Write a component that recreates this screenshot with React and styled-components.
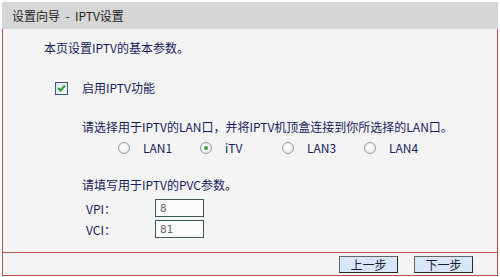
import React, { useState } from 'react';
import styled, { createGlobalStyle } from 'styled-components';

const GlobalStyle = createGlobalStyle`
  body {
    margin: 0;
    background: #fff;
    font-family: "Noto Sans CJK SC", "Noto Sans", sans-serif;
    font-size: 12px;
  }
`;

const Page = styled.div`
  padding: 2px;
  width: 496px;
`;

const Header = styled.div`
  height: 27px;
  background: #d6d6d6;
  display: flex;
  align-items: center;
  padding-left: 10px;
  color: #222;
  font-size: 12px;
  white-space: pre;
`;

const Body = styled.div`
  background: #f4f4f4;
  border: 1px solid #b9544f;
  border-top: none;
  display: flex;
  flex-direction: column;
`;

const Content = styled.div`
  height: 223px;
  padding-top: 11px;
  box-sizing: border-box;
  display: flex;
  flex-direction: column;
  color: #161a60;
`;

const Line = styled.div`
  height: 16px;
  line-height: 16px;
  margin-top: ${(p) => p.$mt || 0}px;
  padding-left: ${(p) => p.$indent || 0}px;
  display: flex;
  align-items: center;
  white-space: nowrap;
`;

const CheckBox = styled.span`
  width: 11px;
  height: 11px;
  border: 1px solid #3a5a78;
  background: linear-gradient(135deg, #dfe3e8, #fafafa);
  display: inline-flex;
  align-items: center;
  justify-content: center;
  margin-right: 14px;
`;

const RadioRow = styled.div`
  margin-top: 4px;
  padding-left: 115px;
  height: 16px;
  display: grid;
  grid-template-columns: repeat(4, 82px);
  align-items: center;
`;

const RadioItem = styled.label`
  display: flex;
  align-items: center;
  cursor: pointer;
`;

const RadioDot = styled.span`
  width: 10px;
  height: 10px;
  border-radius: 50%;
  border: 1px solid #8a9aa8;
  background: radial-gradient(circle at 40% 40%, #ffffff, #e4e6e8);
  display: inline-flex;
  align-items: center;
  justify-content: center;
  margin-right: 13px;

  &::after {
    content: '';
    width: 4px;
    height: 4px;
    border-radius: 50%;
    background: ${(p) => (p.$on ? '#2fa33a' : 'transparent')};
  }
`;

const FieldRow = styled.div`
  display: flex;
  align-items: center;
  padding-left: 83px;
  margin-top: ${(p) => p.$mt}px;
  height: 18px;
`;

const FieldLabel = styled.span`
  width: 69px;
`;

const Input = styled.input`
  width: 49px;
  height: 18px;
  box-sizing: border-box;
  border: 1px solid #3e5a55;
  background: #fbfbfb;
  color: #666;
  font-family: "DejaVu Sans Mono", monospace;
  font-size: 11px;
  padding: 0 4px;
  outline: none;
`;

const ButtonBar = styled.div`
  border-top: 1px solid #b9544f;
  height: 22px;
  display: flex;
  justify-content: flex-end;
  align-items: center;
  gap: 16px;
  padding-right: 24px;
`;

const Button = styled.button`
  width: 59px;
  height: 17px;
  padding: 0;
  background: #d7e6f9;
  border: 1px solid #2b2b2b;
  border-top-color: #666;
  border-left-color: #666;
  color: #1a1a3a;
  font-family: "Noto Sans CJK SC", sans-serif;
  font-size: 12px;
  line-height: 15px;
`;

const ports = ['LAN1', 'iTV', 'LAN3', 'LAN4'];

export default function App() {
  const [port, setPort] = useState('iTV');
  const [vpi, setVpi] = useState('8');
  const [vci, setVci] = useState('81');

  return (
    <Page>
      <GlobalStyle />
      <Header>设置向导  -  IPTV设置</Header>
      <Body>
        <Content>
          <Line $indent={41}>本页设置IPTV的基本参数。</Line>
          <Line $indent={52} $mt={24}>
            <CheckBox>
              <svg width="9" height="8" viewBox="0 0 9 8">
                <path d="M1 4 L3.5 6.5 L8 1.5" fill="none" stroke="#2e9b3a" strokeWidth="2" />
              </svg>
            </CheckBox>
            启用IPTV功能
          </Line>
          <Line $indent={79} $mt={23}>请选择用于IPTV的LAN口，并将IPTV机顶盒连接到你所选择的LAN口。</Line>
          <RadioRow>
            {ports.map((p) => (
              <RadioItem key={p} onClick={() => setPort(p)}>
                <RadioDot $on={port === p} />
                {p}
              </RadioItem>
            ))}
          </RadioRow>
          <Line $indent={79} $mt={22}>请填写用于IPTV的PVC参数。</Line>
          <FieldRow $mt={6}>
            <FieldLabel>VPI：</FieldLabel>
            <Input value={vpi} onChange={(e) => setVpi(e.target.value)} />
          </FieldRow>
          <FieldRow $mt={3}>
            <FieldLabel>VCI：</FieldLabel>
            <Input value={vci} onChange={(e) => setVci(e.target.value)} />
          </FieldRow>
        </Content>
        <ButtonBar>
          <Button>上一步</Button>
          <Button>下一步</Button>
        </ButtonBar>
      </Body>
    </Page>
  );
}
